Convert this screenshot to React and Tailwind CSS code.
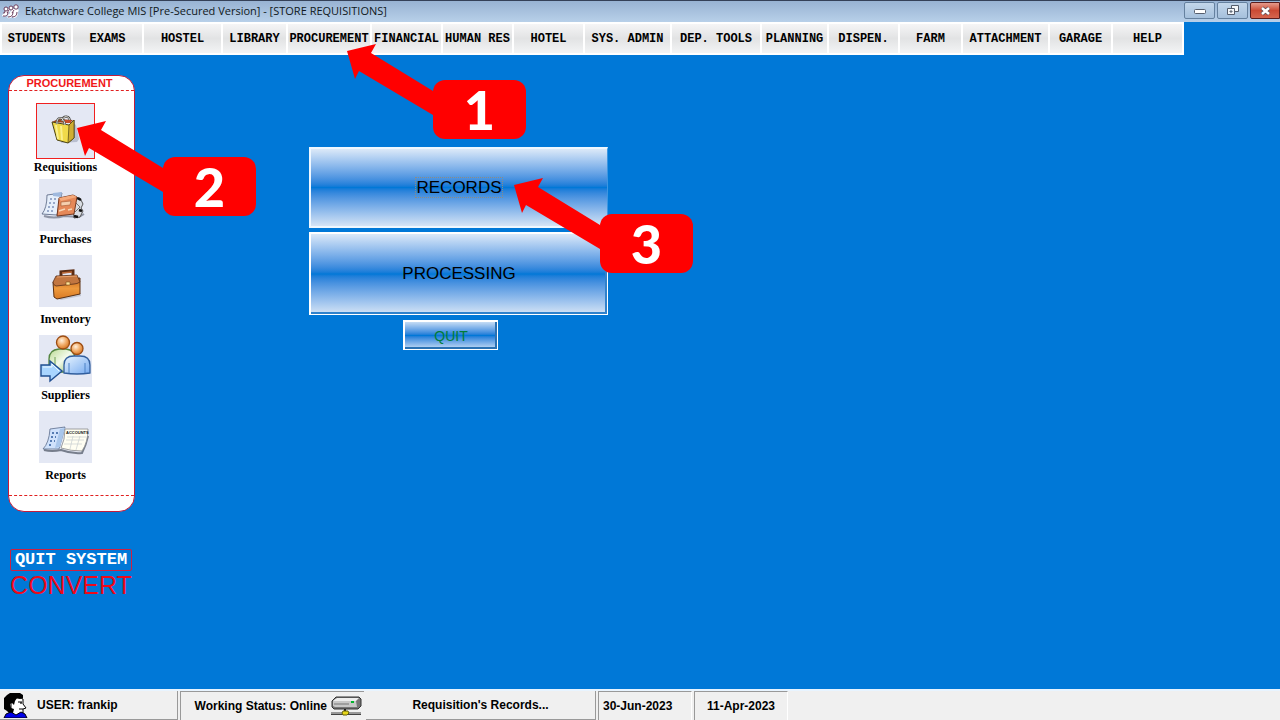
import React from "react";

const MENU = [
  "STUDENTS", "EXAMS", "HOSTEL", "LIBRARY", "PROCUREMENT", "FINANCIAL", "HUMAN RES", "HOTEL",
  "SYS. ADMIN", "DEP. TOOLS", "PLANNING", "DISPEN.", "FARM", "ATTACHMENT", "GARAGE", "HELP",
];

function AppIcon() {
  return (
    <svg width="17" height="16" viewBox="0 0 17 16" fill="#fff" stroke="#6b3c5c" strokeWidth="1">
      <path d="M1 11q3 2 4-2l2-3M6 13q3 1 4-3l2-4M11 13q3 0 3-4l1-3" fill="none" stroke="#fff" strokeWidth="4" />
      <path d="M1 13q5 1 5-4M6 14q5 0 5-5M10 14q5 0 5-5M1 10q2 1 2-2M5 10l2-3M10 10l2-3" fill="none" />
      <circle cx="4" cy="6" r="2" />
      <circle cx="9" cy="5" r="2" />
      <circle cx="14" cy="4" r="2.2" />
    </svg>
  );
}

function BagIcon() {
  return (
    <svg width="52" height="52" viewBox="0 0 52 52">
      <path d="M22 38l16-1 2-3-3-14-4-3z" fill="#b9bfd0" />
      <path d="M13 17l6-3 15 1-3 3z" fill="#9b4a20" />
      <path d="M13 17l17 3 5-5 0 18-6 5-11-3z" fill="#f0da4a" stroke="#4a4212" strokeWidth="1" />
      <path d="M30 20l5-5v18l-6 5z" fill="#cfae32" stroke="#4a4212" strokeWidth=".7" />
      <path d="M17 20l2 14M22 21l1 14" stroke="#faf08c" strokeWidth="2" />
      <path d="M18 19c-1-8 7-8 8 1M23 16c1-6 8-6 8 1" fill="none" stroke="#444" strokeWidth="2.2" />
      <path d="M18 19c-1-8 7-8 8 1M23 16c1-6 8-6 8 1" fill="none" stroke="#e8e6da" strokeWidth="1" />
      <path d="M25 15h7v3h-5z" fill="#c74d2b" />
    </svg>
  );
}

function PurchasesIcon() {
  return (
    <svg width="53" height="52" viewBox="0 0 53 52">
      <path d="M5 37q10 3 20 0l15 1 5-3" stroke="#8f95a5" strokeWidth="2" fill="none" />
      <path d="M8 16l15-2-5 22-15-1q5-6 5-19z" fill="#e6effb" stroke="#53617e" strokeWidth=".8" />
      <path d="M14 14l9-1-1 5-8-1z" fill="#9fb9de" />
      <path d="M11 20l8 0M10 24h7M9 28h7M8 32h6" stroke="#4a659a" strokeWidth="1.2" strokeDasharray="2 2" />
      <path d="M33 18l8 1 3 6-2 4 2 3-3 6-6 1z" fill="#d9dde3" stroke="#555" strokeWidth="1" />
      <path d="M38 19l4 2M40 31l3 1M35 37l4 1" stroke="#111" strokeWidth="2.5" />
      <path d="M35 22l6 6M36 33l5-5" stroke="#777" strokeWidth="1" />
      <path d="M20 19l14-3 4 2-3 17-17 2z" fill="#e58858" stroke="#74381f" />
      <path d="M20 19l14-3 4 2-16 4z" fill="#f5aa7b" />
      <path d="M22 23l10-1-1 4-9 1z" fill="#f5cfae" stroke="#a25731" strokeWidth=".6" />
      <path d="M20 32l6-2M29 31l4-1" stroke="#f5d6b6" strokeWidth="1.5" />
    </svg>
  );
}

function BriefcaseIcon() {
  return (
    <svg width="53" height="52" viewBox="0 0 53 52">
      <defs>
        <linearGradient id="leather" x1="0" y1="0" x2="0" y2="1">
          <stop offset="0" stopColor="#c9661b" />
          <stop offset=".5" stopColor="#ee9a3d" />
          <stop offset="1" stopColor="#d97a24" />
        </linearGradient>
      </defs>
      <path d="M18 43l24-5v3l-20 4z" fill="#c2c6d2" />
      <path d="M22 22v-5l12-1v5" fill="none" stroke="#5c2c12" strokeWidth="3" />
      <path d="M23 18l10-1" stroke="#bd6a39" strokeWidth="1.5" />
      <path d="M14 27l27-4 0 16-23 5-3-2z" fill="url(#leather)" stroke="#5b3112" />
      <path d="M17 21l21-1 3 7q-3 2-6 2l-18 2q-3-1-3-4z" fill="#c27640" stroke="#59301b" strokeWidth=".8" />
      <path d="M18 22l20-1" stroke="#e9a16c" />
      <path d="M27 27h4v3h-4z" fill="#ffe39b" stroke="#7b4e12" strokeWidth=".6" />
    </svg>
  );
}

function SuppliersIcon() {
  return (
    <svg width="53" height="52" viewBox="0 0 53 52">
      <defs>
        <radialGradient id="face" cx=".4" cy=".35" r=".65">
          <stop offset="0" stopColor="#fff1df" />
          <stop offset=".5" stopColor="#f3b373" />
          <stop offset="1" stopColor="#d97824" />
        </radialGradient>
        <linearGradient id="greenCoat" x1="0" y1="0" x2="1" y2="1">
          <stop offset="0" stopColor="#bada91" />
          <stop offset=".5" stopColor="#f3faeb" />
          <stop offset="1" stopColor="#8dbd60" />
        </linearGradient>
        <linearGradient id="blueCoat" x1="0" y1="0" x2="1" y2="1">
          <stop offset="0" stopColor="#e9f5ff" />
          <stop offset="1" stopColor="#75aaf0" />
        </linearGradient>
      </defs>
      <path d="M10 37V24q0-9 10-10h7q9 1 9 10v13z" fill="url(#greenCoat)" stroke="#548641" strokeWidth="1.3" />
      <path d="M16 22v13" stroke="#6d9d53" />
      <circle cx="24" cy="7.5" r="6.5" fill="url(#face)" stroke="#9c4c12" strokeWidth="1.3" />
      <path d="M25 38V30q0-9 10-9h6q10 0 10 9v8q-13 2-26 0z" fill="url(#blueCoat)" stroke="#315e9d" strokeWidth="1.3" />
      <path d="M30 28v10M46 28v10" stroke="#4c82c5" />
      <circle cx="38" cy="13.500" r="6" fill="url(#face)" stroke="#9c4c12" strokeWidth="1.3" />
      <path d="M2 30h9v-4l12 10-12 10v-5H2z" fill="#a9d5ff" stroke="#204f91" strokeWidth="1.4" />
      <path d="M4 32h9v-3l7 7" fill="none" stroke="#edf8ff" />
    </svg>
  );
}

function ReportsIcon() {
  return (
    <svg width="53" height="52" viewBox="0 0 53 52">
      <path d="M5 39q8 2 17 0 11 4 21 3 4-8 6-17" stroke="#777e8c" strokeWidth="2" fill="none" />
      <path d="M11 18l15-2-6 22-16 0q6-6 7-20z" fill="#cfe1fb" stroke="#5b6c8c" strokeWidth=".8" />
      <path d="M21 18l5-1-5 19-5 1z" fill="#a9c6eb" />
      <path d="M13 22h6M12 26h5M11 30h5M10 34h4" stroke="#315b9c" strokeWidth="1.5" strokeDasharray="2 2" />
      <path d="M26 18h23q0 13-6 22-11 0-21-3 4-8 4-19z" fill="#fffef2" stroke="#898c8e" strokeWidth=".8" />
      <path d="M28 26h19M27 29h18M25 33h18M34 25l-3 13M41 25l-4 14" stroke="#c7ced1" strokeWidth=".7" />
      <text x="27" y="23" fontSize="4" fontWeight="700" fontFamily="Liberation Sans, sans-serif" fill="#111">ACCOUNTS</text>
    </svg>
  );
}

function UserIcon() {
  return (
    <svg width="26" height="26" viewBox="0 0 26 26">
      <path d="M8 6h10l2 1v5l3 4-3 1v4l-5 1-1 3H8z" fill="#fff" stroke="#000" />
      <path d="M1 10V6l3-3 3-2h10l3 2v3l-3 1-3-1-2 3-1 4-2-2-2 1 1 4 3 1-1 4-3 1-3-3-3-2z" fill="#000" />
      <path d="M15 10h4M18 10v2M16 17h4" stroke="#000" strokeWidth="1.2" />
      <path d="M1 26l2-4 5-2 5 3 5-3 4 2 2 4z" fill="#0000e8" stroke="#000" />
    </svg>
  );
}

function NetworkDriveIcon() {
  return (
    <svg width="31" height="20" viewBox="0 0 31 20">
      <path d="M1 5l4-4h23l2 2v7l-3 3H3l-2-2z" fill="#777" stroke="#333" />
      <path d="M2 5h23l1 6H4l-2-1z" fill="#c8c8c8" />
      <path d="M3 4l3-2h22l-3 3H2z" fill="#eee" />
      <path d="M3 8h15" stroke="#777" />
      <path d="M20 6h3" stroke="#00b52c" strokeWidth="2" />
      <path d="M14 13v4" stroke="#222" strokeWidth="2" />
      <path d="M0 16h30v2H0z" fill="#999" />
      <path d="M0 18.500h30" stroke="#444" />
      <path d="M12 15h5l1 2-2 2h-4l-1-2z" fill="#e7d71a" stroke="#655f09" />
    </svg>
  );
}

const MODULES = [
  { name: "Requisitions", Icon: BagIcon, item: "", box: "h-14 w-[59px] border border-[#f02020]" },
  { name: "Purchases", Icon: PurchasesIcon, item: "mt-1", box: "h-[52px] w-[53px]" },
  { name: "Inventory", Icon: BriefcaseIcon, item: "mt-2 gap-1", box: "h-[52px] w-[53px]" },
  { name: "Suppliers", Icon: SuppliersIcon, item: "mt-2", box: "h-[52px] w-[53px]" },
  { name: "Reports", Icon: ReportsIcon, item: "mt-2 gap-1", box: "h-[52px] w-[53px]" },
];

function Callout({ number, place }) {
  return (
    <div className={`pointer-events-none absolute flex h-[59px] w-[93px] items-center justify-center rounded-xl bg-[#ff0000] ${place}`}>
      <svg className="absolute -top-9 right-full" width="86" height="72" viewBox="0 0 86 72">
        <path d="M0 7L29 0L24 9L86 47V71L12 27L8 35Z" fill="#ff0000" />
      </svg>
      <span className="font-[Lato,sans-serif] text-[54px] leading-none font-black text-white">{number}</span>
    </div>
  );
}

function TitleBar() {
  return (
    <header className="flex h-[22px] items-start border-t border-[#354158] bg-linear-to-b from-[#98b3d3] to-[#b8d0e9]">
      <div className="flex h-5 flex-1 items-center gap-1.5 pl-0.5">
        <AppIcon />
        <h1 className="font-['Open_Sans',sans-serif] text-[11px] whitespace-nowrap text-[#101820]">
          Ekatchware College MIS [Pre-Secured Version] - [STORE REQUISITIONS]
        </h1>
      </div>
      <div className="flex gap-0.5 pt-px">
        <button aria-label="Minimize" className="flex h-[17px] w-[31px] items-center justify-center rounded-xs border border-[#65819f] bg-linear-to-b from-[#c3d7eb] to-[#a5c0dc]">
          <svg width="12" height="6"><rect x=".5" y="1.500" width="11" height="4" rx="1" fill="#fff" stroke="#555e6d" /></svg>
        </button>
        <button aria-label="Restore" className="flex h-[17px] w-[31px] items-center justify-center rounded-xs border border-[#65819f] bg-linear-to-b from-[#c3d7eb] to-[#a5c0dc]">
          <svg width="12" height="11" fill="#f4f7fa" stroke="#555e6d">
            <path d="M4.500.500h7v6h-7z" /><path d="M.500 3.500h7v6h-7z" /><path d="M3 6h2v1H3z" />
          </svg>
        </button>
        <button aria-label="Close" className="flex h-[17px] w-[30px] items-center justify-center rounded-l-xs border border-[#5c1d1d] bg-linear-to-b from-[#e59a8c] via-[#cb4a34] to-[#d5654e]">
          <svg width="11" height="10"><path d="M2 2l7 6M9 2L2 8" stroke="#5a4b52" strokeWidth="4" /><path d="M2 2l7 6M9 2L2 8" stroke="#fff" strokeWidth="2.500" /></svg>
        </button>
      </div>
    </header>
  );
}

export default function App() {
  return (
    <div className="relative flex min-h-screen flex-col bg-[#0078d7] font-['Liberation_Sans',Arial,sans-serif] text-black">
      <TitleBar />
      <nav className="grid w-fit grid-cols-[69px_69px_77px_63px_82px_69px_69px_69px_85px_88px_65px_69px_61px_85px_61px_69px] gap-0.5 bg-white p-0.5">
        {MENU.map((name) => (
          <button key={name} className="flex h-[29px] items-center justify-center bg-linear-to-b from-[#f5f5f6] via-[#e2e3e4] to-[#f3f4f5] font-['Liberation_Mono',monospace] text-xs font-bold whitespace-nowrap">
            {name}
          </button>
        ))}
      </nav>

      <div className="flex flex-1">
        <aside className="flex w-[135px] flex-col pt-5 pl-2">
          <section className="rounded-2xl border border-[#c21c3c] bg-white pb-[15px]">
            <h2 className="border-b border-dashed border-[#e02020] pr-2 text-center text-[11px] leading-[14px] font-bold text-[#f01818]"><span className="pl-1">PROCUREMENT</span></h2>
            <div className="flex flex-col items-center border-b border-dashed border-[#e02020] pt-3 pr-3 pb-3">
              {MODULES.map(({ name, Icon, item, box }) => (
                <button key={name} className={`flex flex-col items-center ${item}`}>
                  <span className={`flex items-center justify-center bg-[#e4e8f4] ${box}`}><Icon /></span>
                  <span className="font-['Liberation_Serif',serif] text-xs leading-4 font-bold">{name}</span>
                </button>
              ))}
            </div>
          </section>
          <div className="mt-9 flex flex-col pr-[3px] pl-0.5">
            <button className="mt-px h-[22px] rounded-xs border border-[#d02040] font-['Liberation_Mono',monospace] text-[17px] leading-5 font-bold whitespace-nowrap text-white">QUIT SYSTEM</button>
            <button className="flex justify-center text-[25px] leading-7 text-[#f00818]">CONVERT</button>
          </div>
        </aside>

        <main className="flex flex-col items-start pt-[92px] pl-[174px]">
          <div className="flex w-[299px] flex-col items-center gap-1">
            <button className="flex h-[81px] w-full items-center justify-center border-2 border-r border-[#eef7ff] border-r-[#3c97e2] bg-linear-to-b from-[#dce9f8] via-[#0078d7] to-[#d5e4f5] text-[17px]">
              <span className="outline outline-dotted outline-[#8c8c84] leading-[19px]">RECORDS</span>
            </button>
            <button className="flex h-[83px] w-full items-center justify-center border-2 border-r border-b border-white bg-linear-to-b from-[#dce9f8] via-[#0078d7] to-[#d5e4f5] text-[17px] shadow-[inset_-2px_-2px_0_#2f82cc]">
              PROCESSING
            </button>
            <button className="mt-px mr-4 flex h-[30px] w-[95px] items-center justify-center border-2 border-r border-b border-white bg-linear-to-b from-[#c5dcf4] via-[#0078d7] to-[#c5dcf4] text-sm text-[#007c38] shadow-[inset_-2px_-2px_0_#2871b4]">
              QUIT
            </button>
          </div>
        </main>
      </div>

      <footer className="flex h-[31px] gap-0.5 border-t-2 border-[#e8f4ff] bg-[#f0f0f0] text-xs font-bold whitespace-nowrap">
        <div className="flex w-[178px] items-center gap-2 border-r border-b border-[#999] pl-[3px]"><UserIcon />USER: frankip</div>
        <div className="flex w-[184px] items-center justify-end gap-1 border-t border-l border-[#999] pr-0.5">Working Status: Online<NetworkDriveIcon /></div>
        <div className="flex w-[230px] items-center justify-center border-r border-b border-[#999]">Requisition's Records...</div>
        <div className="flex w-[94px] items-center border-t border-r border-l border-[#999] border-r-white pl-1">30-Jun-2023</div>
        <div className="flex w-[94px] items-center justify-center border-t border-r border-l border-[#999] border-r-white">11-Apr-2023</div>
      </footer>

      <Callout number="1" place="top-[80px] left-[433px]" />
      <Callout number="2" place="top-[157px] left-[163px]" />
      <Callout number="3" place="top-[214px] left-[600px]" />
    </div>
  );
}
